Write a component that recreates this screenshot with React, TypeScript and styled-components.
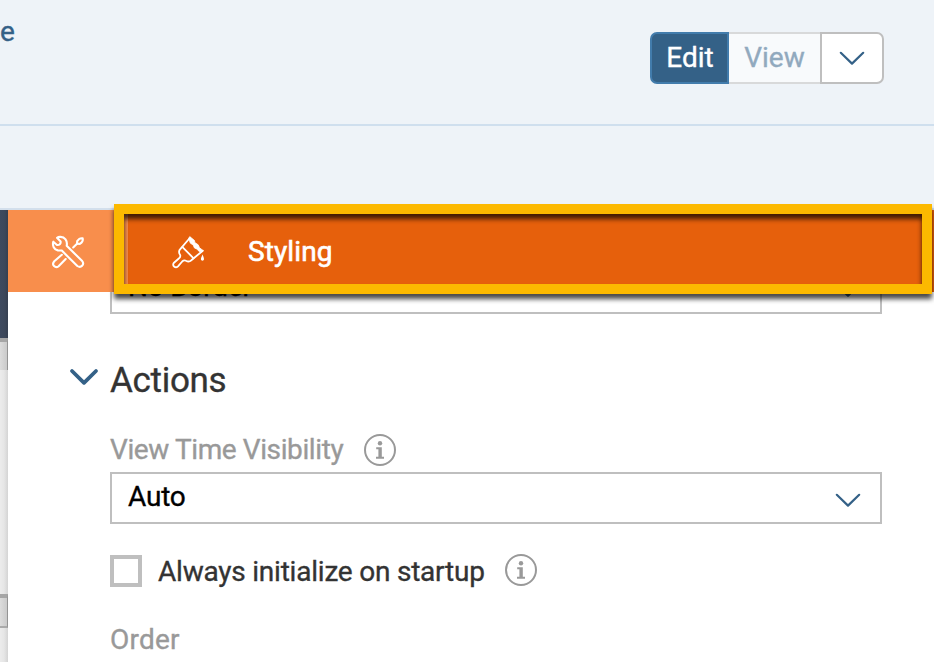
import React from 'react';
import styled, { createGlobalStyle } from 'styled-components';

const GlobalStyle = createGlobalStyle`
  * { box-sizing: border-box; }
  body {
    margin: 0;
    background: #fff;
    font-family: Roboto, "Liberation Sans", sans-serif;
    font-size: 28px;
    -webkit-text-stroke: 0.35px currentColor;
    overflow: hidden;
  }
`;

const Page = styled.div`
  width: 934px;
  height: 662px;
  display: flex;
  flex-direction: column;
  overflow: hidden;
`;

const Header = styled.header`
  flex: none;
  height: 126px;
  padding: 0 50px 0 0;
  display: flex;
  justify-content: space-between;
  align-items: flex-start;
  background: #eef3f8;
  border-bottom: 2px solid #cfdfee;
`;

const MenuLabel = styled.span`
  margin-top: 16px;
  line-height: 32px;
  color: #346187;
`;

const SubBar = styled.div`
  flex: none;
  height: 84px;
  background: #eef3f8;
  border-bottom: 2px solid #d3dfec;
`;

const ModeSwitch = styled.div`
  display: flex;
  height: 52px;
  margin-top: 32px;
`;

const ModeButton = styled.button<{ $kind: 'active' | 'idle' | 'menu' }>`
  display: flex;
  align-items: center;
  justify-content: center;
  width: ${p => (p.$kind === 'active' ? 79 : p.$kind === 'idle' ? 91 : 64)}px;
  padding: 0;
  padding-left: ${p => (p.$kind === 'active' ? 1 : 0)}px;
  font: inherit;
  border: 2px solid ${p => (p.$kind === 'active' ? '#427cac' : p.$kind === 'idle' ? '#d8d9da' : '#bfbfbf')};
  background: ${p => (p.$kind === 'active' ? '#346187' : p.$kind === 'idle' ? '#f8fafc' : '#fff')};
  color: ${p => (p.$kind === 'active' ? '#fff' : '#91a9be')};
  border-radius: ${p => (p.$kind === 'active' ? '7px 0 0 7px' : p.$kind === 'menu' ? '0 7px 7px 0' : '0')};
  ${p => p.$kind === 'idle' && 'border-left: 0; border-right: 0;'}
`;

const ModeText = styled.span`
  height: 48px;
  line-height: 48px;
`;

const Workspace = styled.main`
  flex: 1;
  min-height: 0;
  display: flex;
`;

const CanvasEdge = styled.div`
  flex: none;
  width: 8px;
  display: flex;
  flex-direction: column;
  background: linear-gradient(90deg, #ececec, #e6e6e6 50%, #d4d4d4);
`;

const DarkBand = styled.div`
  height: 128px;
  background: linear-gradient(90deg, #3e4a5f, #3c475a 60%, #353f50);
`;

const Tile = styled.div<{ $gap?: number; $foot?: boolean }>`
  height: ${p => (p.$foot ? 34 : 32)}px;
  margin-top: ${p => p.$gap ?? 0}px;
  border-top: 4px solid #a6a6a6;
  border-right: 1px solid #949494;
  border-bottom: ${p => (p.$foot ? '2px solid #aaa' : '0')};
  background: linear-gradient(90deg, #dcdcdc, #cacaca);
`;

const Panel = styled.section`
  flex: 1;
  min-width: 0;
  display: flex;
  flex-direction: column;
  background: #fff;
`;

const Tabs = styled.div`
  position: relative;
  z-index: 1;
  flex: none;
  height: 82px;
  display: flex;
`;

const ToolsTab = styled.div`
  width: 120px;
  display: flex;
  align-items: center;
  padding: 2px 0 0 44px;
  background: #f88e4c;
`;

const StylingTab = styled.div`
  flex: 1;
  display: flex;
  align-items: center;
  gap: 43px;
  padding: 2px 0 0 44px;
  background: #e6600c;
  color: #fff;
`;

const TabTitle = styled.span`
  height: 32px;
  line-height: 31px;
  letter-spacing: 0.1px;
  -webkit-text-stroke-width: 0.6px;
`;

const Highlight = styled.div`
  position: absolute;
  left: 106px;
  top: -6px;
  width: 818px;
  height: 90px;
  border: 10px solid #fcb900;
  filter: drop-shadow(0 5px 2.5px rgba(0, 0, 0, 0.72));
`;

const Form = styled.div`
  flex: 1;
  min-height: 0;
  padding: 0 52px 0 102px;
  margin-top: -30px;
`;

const Select = styled.div`
  height: 52px;
  display: flex;
  align-items: center;
  justify-content: space-between;
  padding: 3px 19px 0 16px;
  border: 2px solid #bfbfbf;
  color: #000;
`;

const SelectValue = styled.span`
  height: 38px;
  line-height: 32px;
  letter-spacing: -0.2px;
`;

const Section = styled.h2`
  margin: 45px 0 33px -41px;
  display: flex;
  align-items: flex-start;
  gap: 11px;
  height: 42px;
  font-size: 35px;
  line-height: 43px;
  font-weight: 400;
  letter-spacing: -0.3px;
  color: #333;
`;

const Field = styled.div<{ $tone: 'label' | 'option'; $top?: number; $bottom?: number }>`
  height: 32px;
  margin: ${p => p.$top ?? 0}px 0 ${p => p.$bottom ?? 0}px;
  display: flex;
  align-items: center;
  line-height: 32px;
  white-space: nowrap;
  color: ${p => (p.$tone === 'label' ? '#999' : '#333')};
`;

const FieldText = styled.span<{ $width?: number; $tracking?: number; $line?: number }>`
  width: ${p => (p.$width ? `${p.$width}px` : 'auto')};
  height: 32px;
  line-height: ${p => p.$line ?? 32}px;
  letter-spacing: ${p => p.$tracking ?? 0}px;
`;

const Checkbox = styled.span`
  flex: none;
  width: 32px;
  height: 32px;
  margin-right: 16px;
  border: 4px solid #bfbfbf;
  background: #fff;
`;

const Svg = styled.svg`
  display: block;
  flex: none;
  overflow: visible;
`;

const RaisedIcon = styled.span`
  margin-bottom: 2px;
`;

const Chevron = ({ bold = false }: { bold?: boolean }) =>
  bold ? (
    <Svg width="30" height="30" viewBox="0 0 30 30" fill="none" stroke="#346187" strokeWidth="3.8" strokeLinecap="round" strokeLinejoin="round">
      <path d="M3 12 15 23.8 27 12" />
    </Svg>
  ) : (
    <Svg width="26" height="14" viewBox="0 0 26 14" fill="none" stroke="#346187" strokeWidth="2.2" strokeLinecap="round" strokeLinejoin="round">
      <path d="M1.8 1.8 13 12.6 24.2 1.8" />
    </Svg>
  );

const InfoIcon = () => (
  <Svg width="32" height="32" viewBox="0 0 32 32">
    <circle cx="16" cy="16" r="15" fill="none" stroke="#999" strokeWidth="2" />
    <circle cx="16" cy="9.2" r="2.2" fill="#999" />
    <path d="M12.2 13.2H17.8V22.8H20V24.8H12V22.8H14.4V15.2H12.2Z" fill="#999" />
  </Svg>
);

const ToolsIcon = () => (
  <Svg width="32" height="32" viewBox="0 0 32 32" fill="none" stroke="#fff" strokeWidth="2.1" strokeLinecap="round" strokeLinejoin="round">
    <path d="M5 1.8 8.6 5.4C9 7.8 7.3 9.3 5 9L1.3 5.7C.2 9.5 2 13.6 5.8 14.4 7.4 14.8 8.8 14.3 9.8 14.6L25.3 30C29 32.5 32.8 28.4 30.2 25.1L14.7 9.7C15.7 4.8 12.8.6 8 .9 6.8 1 5.8 1.3 5 1.8Z" />
    <path d="M9.8 18.8 2.3 25.3C-.9 29 3.5 32.8 6.6 30.2L13.7 23" />
    <path d="M21.2 11.5 25 7.8" />
    <path d="M25 7.8 25.2 5.2C26.5 3.3 28.7 2 30.7 2.4 31.2 4.4 29.9 6.5 27.8 7.9Z" />
  </Svg>
);

const BrushIcon = () => (
  <Svg width="33" height="32" viewBox="0 0 33 32" fill="none" stroke="#fff" strokeWidth="1.8" strokeLinecap="round" strokeLinejoin="round">
    <path d="M17.8 2 7.6 13.8C6.6 16 7.2 17.8 8.2 19 8.6 20.4 7.8 21.8 6.8 22.5L2 26.7C-.6 29.7 3.5 32.6 6 30.3L10.2 25.5C11.4 24.3 13 24.2 14 24.8 16 25.9 18 25.5 19.3 24.3L30.8 14.7" />
    <path d="M10.5 11.2 21.6 22.3" />
    <path d="M18 .8 22.5 4.5 22.8 6.5 26.2 8.8 27.5 11.7 31 14.5 29.5 16 26.8 15.2 25.2 13.2 22.4 11.9 21.2 9 18.4 7.2 16.8 3Z" fill="#fff" strokeWidth="0.8" />
    <path d="M30.6 18.2C31 20 32 21.6 32 22.9 32 25.2 28.9 25.2 28.9 22.9 28.9 21.6 30.2 20 30.6 18.2Z" fill="#fff" stroke="none" />
  </Svg>
);

export default function App() {
  return (
    <Page>
      <GlobalStyle />
      <Header>
        <MenuLabel>e</MenuLabel>
        <ModeSwitch>
          <ModeButton $kind="active"><ModeText>Edit</ModeText></ModeButton>
          <ModeButton $kind="idle"><ModeText>View</ModeText></ModeButton>
          <ModeButton $kind="menu" aria-label="More modes"><Chevron /></ModeButton>
        </ModeSwitch>
      </Header>
      <SubBar />
      <Workspace>
        <CanvasEdge>
          <DarkBand />
          <Tile />
          <Tile $gap={224} $foot />
        </CanvasEdge>
        <Panel>
          <Tabs>
            <ToolsTab><ToolsIcon /></ToolsTab>
            <StylingTab><BrushIcon /><TabTitle>Styling</TabTitle></StylingTab>
            <Highlight />
          </Tabs>
          <Form>
            <Select><SelectValue>No Border</SelectValue><Chevron /></Select>
            <Section><Chevron bold />Actions</Section>
            <Field $tone="label" $bottom={6}>
              <FieldText $width={254} $tracking={-0.4}>View Time Visibility</FieldText>
              <InfoIcon />
            </Field>
            <Select><SelectValue>Auto</SelectValue><Chevron /></Select>
            <Field $tone="option" $top={31} $bottom={36}>
              <Checkbox />
              <FieldText $width={347} $tracking={-0.22} $line={34}>Always initialize on startup</FieldText>
              <RaisedIcon><InfoIcon /></RaisedIcon>
            </Field>
            <Field $tone="label">
              <FieldText $tracking={0.2} $line={34}>Order</FieldText>
            </Field>
          </Form>
        </Panel>
      </Workspace>
    </Page>
  );
}
